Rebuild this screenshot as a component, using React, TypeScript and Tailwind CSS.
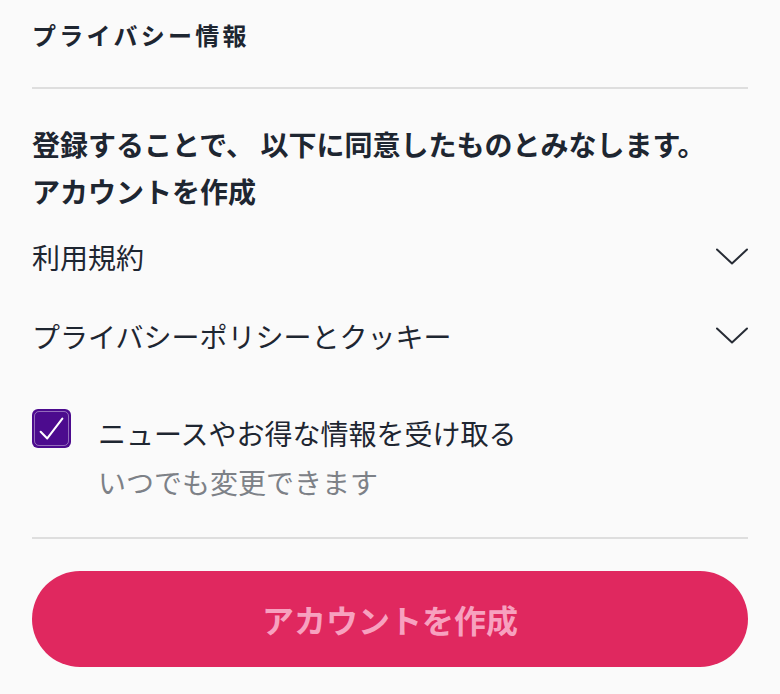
import React from "react";

const Chevron = () => (
  <svg width="32" height="17" viewBox="0 0 32 17" fill="none" className="shrink-0">
    <path d="M1 1.5 L16 15.5 L31 1.5" stroke="#272c35" strokeWidth="2" strokeLinecap="round" strokeLinejoin="round" />
  </svg>
);

export default function App() {
  return (
    <div
      className="w-[780px] h-[694px] bg-[#fafafa] px-[32px] text-[#1e2631] overflow-hidden"
      style={{ fontFamily: '"Noto Sans CJK JP", "Noto Sans", sans-serif' }}
    >
      <h2 className="pt-[19px] text-[24px] leading-[32px] font-semibold tracking-[3.3px]">プライバシー情報</h2>
      <div className="mt-[36px] h-[2px] bg-[#dedede]" />

      <p className="mt-[33px] text-[28px] leading-[44px] font-bold whitespace-nowrap">
        登録することで、 以下に同意したものとみなします。
      </p>
      <h3 className="mt-[3px] text-[28px] leading-[44px] font-bold">アカウントを作成</h3>

      <div className="mt-[4px] flex flex-col">
        <button className="h-[79px] flex items-center justify-between text-[28px] leading-[40px] text-[#1e2631]">
          <span>利用規約</span>
          <Chevron />
        </button>
        <button className="h-[79px] flex items-center justify-between text-[28px] leading-[40px] text-[#1e2631]">
          <span>プライバシーポリシーとクッキー</span>
          <Chevron />
        </button>
      </div>

      <div className="mt-[34px] flex items-start gap-[27px]">
        <div className="w-[39px] h-[39px] shrink-0 rounded-[6px] bg-[#4c0b8e] p-[2px]">
          <div className="w-full h-full rounded-[5px] border border-white/40 flex items-center justify-center">
            <svg width="35" height="35" viewBox="0 0 35 35" fill="none">
              <path d="M6 21 L13 28 L29 7" stroke="#ffffff" strokeWidth="2.2" strokeLinecap="round" strokeLinejoin="round" />
            </svg>
          </div>
        </div>
        <div className="flex flex-col">
          <span className="text-[28px] leading-[48px]">ニュースやお得な情報を受け取る</span>
          <span className="text-[28px] leading-[50px] text-[#7d8187]">いつでも変更できます</span>
        </div>
      </div>

      <div className="mt-[30px] h-[2px] bg-[#dedede]" />

      <button className="mt-[32px] w-full h-[96px] rounded-full bg-[#e0285f] flex items-center justify-center text-[32px] font-bold text-[#f7a1bf]">
        アカウントを作成
      </button>
    </div>
  );
}
